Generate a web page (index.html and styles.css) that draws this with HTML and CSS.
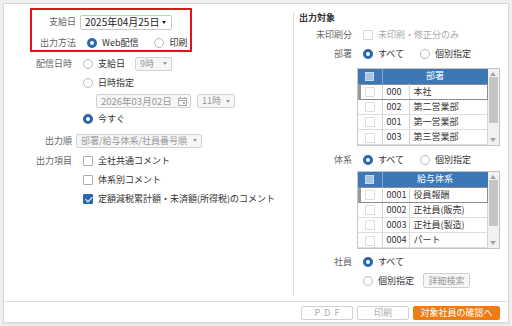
FILE: index.html
```html
<!DOCTYPE html>
<html lang="ja">
<head>
    <meta charset="UTF-8">
    <title>明細出力</title>
    <link rel="stylesheet" href="styles.css">
</head>
<body>
    <div class="panel">
        <div class="main">
            <div class="left">
                <!-- 支給日と出力方法は赤枠で囲む -->
                <div class="highlight">
                    <div class="row row-pay">
                        <span class="lbl">支給日</span>
                        <span class="select select-pay">2025年04月25日<i class="caret"></i></span>
                    </div>
                    <div class="row row-method">
                        <span class="lbl">出力方法</span>
                        <span class="radio on"><i></i>Web配信</span>
                        <span class="radio"><i></i>印刷</span>
                    </div>
                </div>

                <div class="row row-send">
                    <span class="lbl">配信日時</span>
                    <span class="radio"><i></i>支給日</span>
                    <span class="select off select-hour">9時<i class="caret"></i></span>
                </div>
                <div class="row">
                    <span class="lbl"></span>
                    <span class="radio"><i></i>日時指定</span>
                </div>
                <div class="row row-date">
                    <span class="lbl"></span>
                    <span class="date">2026年03月02日
                        <svg width="9" height="9" viewBox="0 0 9 9"><rect x="0.5" y="1.5" width="8" height="7" fill="none" stroke="#aaa"/><path d="M0.5 3.5h8M2.5 0v2M6.5 0v2" stroke="#aaa"/><rect x="5" y="5" width="2" height="2" fill="#aaa"/></svg>
                    </span>
                    <span class="select off select-hour2">11時<i class="caret"></i></span>
                </div>
                <div class="row row-now">
                    <span class="lbl"></span>
                    <span class="radio on"><i></i>今すぐ</span>
                </div>

                <div class="row row-order">
                    <span class="lbl">出力順</span>
                    <span class="select off select-order">部署/給与体系/社員番号順<i class="caret"></i></span>
                </div>

                <div class="row row-items">
                    <span class="lbl">出力項目</span>
                    <span class="check"><i></i>全社共通コメント</span>
                </div>
                <div class="row">
                    <span class="lbl"></span>
                    <span class="check"><i></i>体系別コメント</span>
                </div>
                <div class="row">
                    <span class="lbl"></span>
                    <span class="check on"><i></i>定額減税累計額・未済額(所得税)のコメント</span>
                </div>
            </div>

            <div class="right">
                <div class="title">出力対象</div>
                <div class="row row-unprinted">
                    <span class="lbl">未印刷分</span>
                    <span class="check off"><i></i>未印刷・修正分のみ</span>
                </div>
                <div class="row row-dept">
                    <span class="lbl">部署</span>
                    <span class="radio on"><i></i>すべて</span>
                    <span class="radio"><i></i>個別指定</span>
                </div>
                <div class="grid grid-dept">
                    <table>
                        <colgroup><col class="w-chk"><col class="w-code"><col></colgroup>
                        <thead>
                            <tr><th class="c-chk"><i class="hbox"></i></th><th colspan="2">部署</th></tr>
                        </thead>
                        <tbody>
                            <tr class="cur"><td class="c-chk"><i class="bx"></i></td><td>000</td><td>本社</td></tr>
                            <tr><td class="c-chk"><i class="bx"></i></td><td>002</td><td>第二営業部</td></tr>
                            <tr><td class="c-chk"><i class="bx"></i></td><td>001</td><td>第一営業部</td></tr>
                            <tr><td class="c-chk"><i class="bx"></i></td><td>003</td><td>第三営業部</td></tr>
                        </tbody>
                    </table>
                    <div class="sbar"><span class="up"></span><span class="thumb"></span><span class="dn"></span></div>
                </div>

                <div class="row row-kei">
                    <span class="lbl">体系</span>
                    <span class="radio on"><i></i>すべて</span>
                    <span class="radio"><i></i>個別指定</span>
                </div>
                <div class="grid grid-kei">
                    <table>
                        <colgroup><col class="w-chk"><col class="w-code"><col></colgroup>
                        <thead>
                            <tr><th class="c-chk"><i class="hbox"></i></th><th colspan="2">給与体系</th></tr>
                        </thead>
                        <tbody>
                            <tr class="cur"><td class="c-chk"><i class="bx"></i></td><td>0001</td><td>役員報酬</td></tr>
                            <tr><td class="c-chk"><i class="bx"></i></td><td>0002</td><td>正社員(販売)</td></tr>
                            <tr><td class="c-chk"><i class="bx"></i></td><td>0003</td><td>正社員(製造)</td></tr>
                            <tr><td class="c-chk"><i class="bx"></i></td><td>0004</td><td>パート</td></tr>
                        </tbody>
                    </table>
                    <div class="sbar"><span class="up"></span><span class="thumb"></span><span class="dn"></span></div>
                </div>

                <div class="row row-emp">
                    <span class="lbl">社員</span>
                    <span class="radio on"><i></i>すべて</span>
                </div>
                <div class="row">
                    <span class="lbl"></span>
                    <span class="radio"><i></i>個別指定</span>
                    <button class="btn-search">詳細検索</button>
                </div>
            </div>
        </div>

        <div class="footer">
            <button class="btn btn-pdf">PDF</button>
            <button class="btn btn-print">印刷</button>
            <button class="btn btn-go">対象社員の確認へ</button>
        </div>
    </div>
</body>
</html>
```

FILE: styles.css
```css
* {
    box-sizing: border-box;
}
body {
    margin: 0;
    background: #f0f0f0;
    font-family: "Noto Sans CJK JP", "Noto Sans", sans-serif;
    font-size: 9px;
    line-height: 12px;
    color: #333;
}
.panel {
    margin: 3px;
    height: 320px;
    background: #fff;
    border: 1px solid #d9d9d9;
    box-shadow: 0 1px 2px rgba(0, 0, 0, 0.08);
    display: flex;
    flex-direction: column;
}
.main {
    display: flex;
    height: 297px;
}

/* 左側 */
.left {
    width: 289px;
    padding-top: 4px;
}
.row {
    display: flex;
    align-items: center;
    height: 19px;
}
.lbl {
    width: 68px;
    margin-right: 4px;
    text-align: right;
    color: #666;
    flex-shrink: 0;
}
.highlight {
    margin-left: 26px;
    width: 162px;
    height: 44px;
    border: 2px solid #e5121e;
    padding-top: 4px;
}
.highlight .lbl {
    width: 44px;
}
.highlight .row-pay {
    height: 16px;
}
.highlight .row-method {
    height: 15px;
    margin-top: 5px;
}
.row-send {
    margin-top: 2px;
}
.row-date,
.row-now {
    height: 18px;
}
.row-order {
    margin-top: 3px;
}
.row-items {
    margin-top: 1px;
}

/* ラジオ・チェック */
.radio,
.check {
    display: inline-flex;
    align-items: center;
    margin-left: 7px;
    white-space: nowrap;
}
.radio + .radio {
    margin-left: 16px;
}
.radio i {
    width: 10px;
    height: 10px;
    margin-right: 5px;
    border: 1px solid #b8b8b8;
    border-radius: 50%;
    background: #fff;
}
.radio.on i {
    border: 3px solid #2a68ad;
}
.check i {
    position: relative;
    width: 10px;
    height: 10px;
    margin-right: 5px;
    border: 1px solid #adadad;
    border-radius: 1px;
    background: #fff;
}
.check.on i {
    border-color: #2a68ad;
    background: #2a68ad;
}
.check.on i::after {
    content: "";
    position: absolute;
    left: 2.5px;
    top: 0;
    width: 3px;
    height: 6px;
    border-right: 1.5px solid #fff;
    border-bottom: 1.5px solid #fff;
    transform: rotate(45deg);
}
.check.off {
    color: #aaa;
}
.check.off i {
    border-color: #d8d8d8;
}

/* セレクト */
.select,
.date {
    display: inline-flex;
    align-items: center;
    justify-content: space-between;
    height: 14px;
    padding: 0 4px;
    border: 1px solid #c8c8c8;
    border-radius: 2px;
    background: #fff;
    white-space: nowrap;
}
.select.off,
.date {
    background: #f6f6f6;
    color: #999;
    border-color: #d2d2d2;
}
.caret {
    width: 0;
    height: 0;
    border-left: 2.5px solid transparent;
    border-right: 2.5px solid transparent;
    border-top: 3px solid #222;
}
.select.off .caret {
    border-top-color: #999;
}
.select-pay {
    width: 92px;
    height: 15px;
    font-size: 10px;
    color: #222;
    padding-right: 5px;
}
.select-hour {
    width: 37px;
    margin-left: 10px;
}
.date {
    width: 95px;
    margin-left: 20px;
    font-size: 9.5px;
    padding-right: 3px;
}
.select-hour2 {
    width: 38px;
    margin-left: 6px;
}
.select-order {
    width: 126px;
}

/* 右側 */
.right {
    flex: 1;
    margin: 8px 0 5px;
    border-left: 1px solid #ddd;
    padding-left: 5px;
}
.title {
    font-weight: bold;
    height: 11px;
    line-height: 11px;
}
.right .lbl {
    width: 53px;
}
.row-unprinted {
    margin-top: 3px;
    height: 18px;
}
.row-dept {
    margin-top: 1px;
    height: 18px;
}
.row-kei {
    margin-top: 5px;
    height: 18px;
}
.row-emp {
    margin-top: 4px;
    height: 18px;
}
.grid {
    display: flex;
    width: 143px;
    height: 78px;
    margin-left: 58px;
    border: 1px solid #c4c4c4;
}
.grid-dept {
    margin-top: 5px;
}
.grid-kei {
    margin-top: 2px;
}
table {
    width: 131px;
    border-collapse: collapse;
    table-layout: fixed;
}
col.w-chk {
    width: 24px;
}
col.w-code {
    width: 27px;
}
th {
    height: 15px;
    padding: 0;
    background: #3c78b6;
    color: #fff;
    font-weight: normal;
}
td {
    height: 15px;
    padding: 0 0 0 4px;
    border-bottom: 1px solid #ddd;
    border-right: 1px solid #d4d4d4;
    white-space: nowrap;
    overflow: hidden;
}
.c-chk {
    padding: 0;
    text-align: center;
}
th.c-chk {
    border-right: 1px solid #7fa5cf;
}
.hbox {
    display: inline-block;
    width: 9px;
    height: 9px;
    background: #a9c4e0;
    border: 1px solid #c9dbee;
    vertical-align: middle;
}
.bx {
    display: inline-block;
    width: 10px;
    height: 10px;
    border: 1px solid #dcdcdc;
    border-radius: 1px;
    vertical-align: middle;
}
tr.cur td {
    border-top: 1px solid #8c8c8c;
    border-bottom: 1px solid #8c8c8c;
}
tr.cur td.c-chk {
    box-shadow: inset 3px 0 #9a9a9a;
}
tr.cur td:last-child {
    border-right: 1px solid #8c8c8c;
}
.sbar {
    position: relative;
    width: 11px;
    background: #f1f1f1;
}
.sbar .up,
.sbar .dn {
    position: absolute;
    left: 2px;
    width: 0;
    height: 0;
    border-left: 3.5px solid transparent;
    border-right: 3.5px solid transparent;
}
.sbar .up {
    top: 3px;
    border-bottom: 4px solid #a3a3a3;
}
.sbar .dn {
    bottom: 3px;
    border-top: 4px solid #a3a3a3;
}
.sbar .thumb {
    position: absolute;
    left: 1px;
    top: 8px;
    width: 9px;
    height: 46px;
    background: #c4c4c4;
}
.btn-search {
    margin-left: 9px;
    width: 47px;
    height: 15px;
    padding: 0;
    font-family: inherit;
    font-size: 9px;
    line-height: 12px;
    color: #999;
    background: #f7f7f7;
    border: 1px solid #cfcfcf;
    border-radius: 2px;
}

/* フッター */
.footer {
    display: flex;
    justify-content: flex-end;
    gap: 4px;
    height: 21px;
    padding: 4px 8px 0 0;
    border-top: 1px solid #dcdcdc;
}
.btn {
    height: 14px;
    padding: 0;
    font-family: inherit;
    font-size: 9px;
    line-height: 12px;
    border: 1px solid #d0d0d0;
    border-radius: 2px;
    background: #fff;
    color: #aaa;
}
.btn-pdf {
    width: 52px;
    letter-spacing: 4px;
    text-indent: 4px;
}
.btn-print {
    width: 52px;
}
.btn-go {
    width: 87px;
    background: #f27c12;
    border-color: #f27c12;
    color: #fff;
}
```
